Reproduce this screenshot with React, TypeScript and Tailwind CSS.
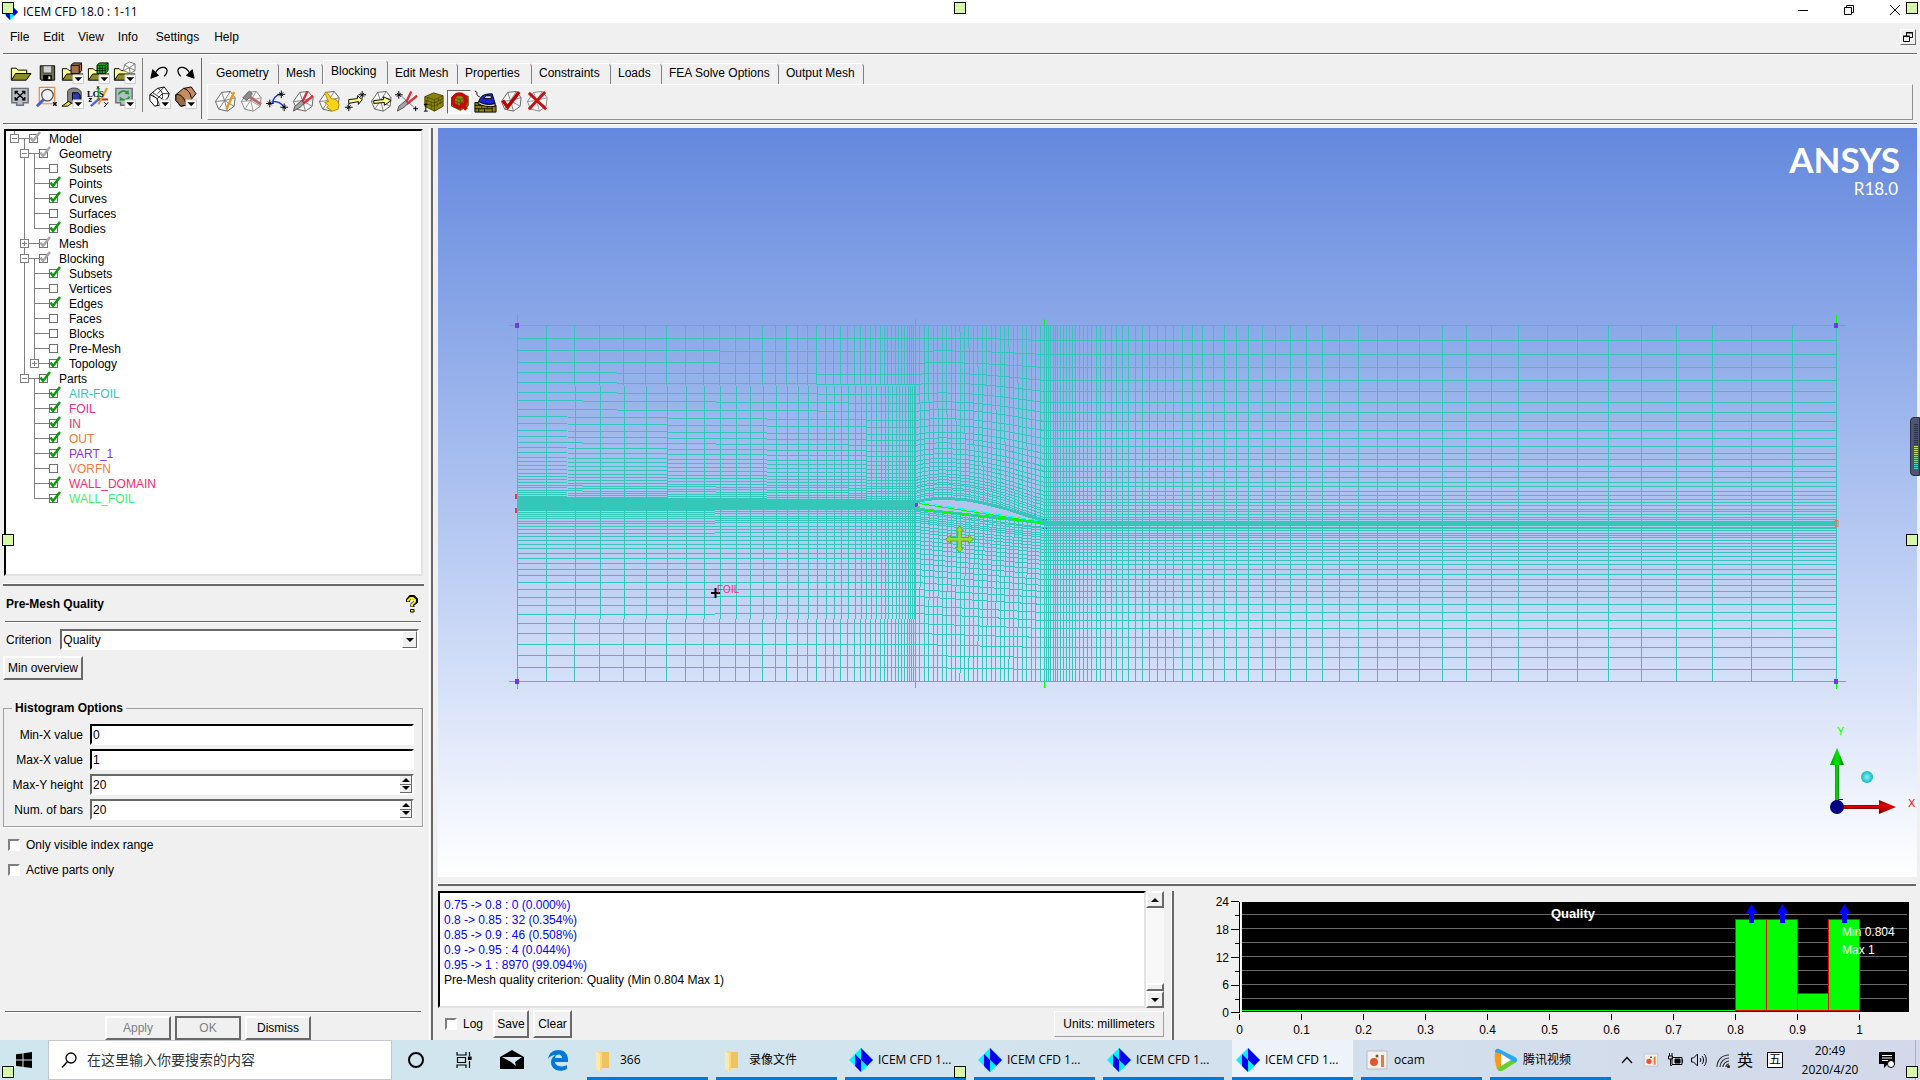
import React from 'react';

const ARIAL = "font-['Liberation_Sans',Arial,sans-serif]";
const SEGOE = "font-['Open_Sans','Noto_Sans_CJK_SC',sans-serif]";
const RAISED = 'border-2 border-t-white border-l-white border-r-[#696969] border-b-[#696969] bg-[#f0f0f0]';
const SUNKEN = 'border-2 border-t-[#696969] border-l-[#696969] border-r-white border-b-white bg-white';

/* ---------- toolbar icons ---------- */

const Icon: React.FC<{ children: React.ReactNode; className?: string }> = ({ children, className = 'size-6' }) => (
  <svg viewBox="-1 0 25 25" className={className} fill="none" stroke="#000" strokeWidth="1">
    {children}
  </svg>
);

const Wire = ({ color = '#666' }: { color?: string }) => (
  <g stroke={color}>
    <path d="M8 2.500 17 1.500 22 8 21 17 14 22 5 20 1.500 12z" fill="#f7f7f7" />
    <path d="M8 2.500 11 11 17 1.500M1.500 12 11 11 22 8M5 20 11 11 14 22M11 11 21 17" strokeWidth=".8" />
  </g>
);

const Drop = () => (
  <g>
    <path d="M12.500 14.500h11v9h-11z" fill="#fff" stroke="#ccc" />
    <path d="M14 17h8l-4 4z" fill="#000" stroke="none" />
  </g>
);

const Folder = () => (
  <g>
    <path d="M1.500 20V8h5l2 2h9v4" fill="#ffff99" />
    <path d="M1.500 20 6 13.500h17L18 20z" fill="#8b8b2b" />
  </g>
);

const Scissors = () => (
  <g>
    <path d="M16 1.500 10 14M22 6 11 15" stroke="#d8303c" strokeWidth="2.500" />
    <path d="M10 11 3 17 1.500 22l7-4 4-4z" fill="#a4a4a4" stroke="#555" />
  </g>
);

const Star = ({ x, y }: { x: number; y: number }) => (
  <path d={`M${x - 4} ${y}h8M${x} ${y - 4}v8M${x - 2} ${y - 2}l4 4M${x + 2} ${y - 2}l-4 4`} />
);

const Monitor = () => <path d="M3 2.500h17v15h-5v2.500h-7v-2.500H3z" fill="#b9bcc2" stroke="#6c7078" strokeWidth="1.500" />;

const fileIcons: [string, React.ReactNode][] = [
  ['Open project', <g key="a"><path d="M2.500 20V7.500h5l2 2h9V13" fill="#ffff99" /><path d="M2.500 20 7 13h16l-5 7z" fill="#8b8b2b" /></g>],
  ['Save project', <g key="b"><path d="M5.500 5h15v15h-14l-1-1z" fill="#6e7150" /><path d="M8.500 5h9v7.500h-9z" fill="#d4d4d4" stroke="#444" /><path d="M9 15h8v5H9z" fill="#000" /><path d="M14 16h2v3h-2z" fill="#fff" stroke="none" /></g>],
  ['Open geometry', <g key="c"><Folder /><path d="M10.500 4.500 13 2h8.500v8L19 13h-8.500z" fill="#a5714a" /><path d="M10.500 4.500H19V13M19 4.500 21.500 2" /><Drop /></g>],
  ['Open mesh', <g key="d"><Folder /><path d="M10.500 4.500 13 2h9v8l-3 3h-8.500z" fill="#18c02a" /><path d="M10.500 4.500H19V13M19 4.500 22 2M13.500 4.500V13M16 4.500V13M10.500 7.500H19l3-3M10.500 10H19l3-3" strokeWidth=".8" /><Drop /></g>],
  ['Open blocking', <g key="e"><Folder /><path d="m12 4 5-3 6 2v7l-5 3-7-3z" fill="#fff" stroke="#777" /><path d="m12 4 5 3 6-4M17 7l1 6M11 10l6-3 6 3" stroke="#777" /><Drop /></g>],
];

const viewIcons: [string, React.ReactNode][] = [
  ['Fit window', <g key="a"><Monitor /><path d="M6.500 5.500 16.500 14.500M16.500 5.500 6.500 14.500M6.500 8.500v-3h3M13.500 5.500h3v3M6.500 11.500v3h3M13.500 14.500h3v-3" strokeWidth="1.300" /></g>],
  ['Box zoom', <g key="b"><path d="M4.500 1.500h16v17h-16z" stroke="#ee8833" strokeWidth="1.200" /><circle cx="13" cy="9.500" r="6" fill="#f2f4fb" stroke="#555" strokeWidth="1.300" /><path d="m9 14-7 7" stroke="#4660cf" strokeWidth="3" /><path d="m19 17 3.500 3.500m0-3.500-3.500 3.500" strokeWidth="1.500" /></g>],
  ['Measure distance', <g key="c"><path d="M7 5c3-4 11-4 14 1v12H7z" fill="#888" stroke="#333" /><path d="M12 7h6l2 3v5h-8z" fill="#2738b8" /><path d="M8 16 1 21h6l4-3z" fill="#f0e040" /><Drop /></g>],
  ['Local coordinate system', <g key="d"><path d="M12 2v12" stroke="#18b030" strokeWidth="2" /><path d="m12 14-8 7" stroke="#5568d0" strokeWidth="2.500" /><path d="M12 14h10" stroke="#d02020" strokeWidth="2" /><path d="M21 2 12 19" stroke="#e9a030" strokeWidth="2.200" /><path d="m2 13 3 0-3 3h3M18 17l2 2m2-2-4 5M10 0l3 3m0-3-3 3" /><text x="0" y="11" fontSize="9" fontFamily="Liberation Serif, serif" fontWeight="700" fill="#000" stroke="none">LCS</text></g>],
  ['Refresh', <g key="e"><Monitor /><path d="M6 9c1-4 7-5 9-2M17 11c-1 4-7 4-9 2" stroke="#1c9c36" strokeWidth="1.800" /><path d="m16 4 1 5-5-1zM7 16v-5l4 3z" fill="#1c9c36" stroke="none" /><Drop /></g>],
];

const undoIcons: [string, React.ReactNode][] = [
  ['Undo', <g key="a"><path d="M7 14c4-9 12-9 13-4 0 3-1 4-3 6" strokeWidth="1.300" /><path d="m3 18 2-9 6 6z" fill="#000" /></g>],
  ['Redo', <g key="b"><path d="M17 14c-4-9-12-9-13-4 0 3 1 4 3 6" strokeWidth="1.300" /><path d="m21 18-2-9-6 6z" fill="#000" /></g>],
];

const renderIcons: [string, React.ReactNode][] = [
  ['Wire frame', <g key="a"><path d="M10 2.500 17 1l5 7-1 4-9 8-5 1-5-6V9z" fill="#fff" /><path d="M10 2.500C14 4 16 8 15 13M2 9c4 0 8 4 10 11M2 9l8 4 5-5 7 0M10 13v7M5 7l12 8M17 1l-7 7" strokeWidth=".8" /><Drop /></g>],
  ['Solid', <g key="b"><path d="M10 2.500 18 1l5 7-10 12-6 1-5-6V9z" fill="#c58d60" /><path d="M2 9c5-1 9 3 11 11l-6 1-5-6z" fill="#9c6a43" /><path d="M10 2.500c4 1 7 4 8 10" /><Drop /></g>],
];

const Bricks = ({ y = 0 }: { y?: number }) => (
  <g transform={`translate(0 ${y})`}>
    <path d="M3 7 12 3l10 3v11l-9 5L3 17z" fill="#8c8500" stroke="#4a4600" />
    <path d="m3 7 10 3 9-4M13 10v12M3 10.500l10 3 9-5M3 14l10 3 9-5M6 8v3M9.500 12.500V16M5 11v4M10 16v4M17 8.500v3M19 10.500v4M16 13v4" stroke="#3c3a00" strokeWidth=".7" />
  </g>
);

const blockingIcons: [string, React.ReactNode][] = [
  ['Create block', <g key="a"><Wire /><path d="M21 2 13 20" stroke="#e89a1c" strokeWidth="2.500" /></g>],
  ['Split block', <g key="b"><Wire color="#888" /><path d="m3 8 7-7 3 3-6 7z" fill="#8a8a8a" stroke="#666" /><path d="m10 7 12 8" stroke="#b86b6b" strokeWidth="3" /></g>],
  ['Merge vertices', <g key="c"><path d="M15 4C9 6 7 9 7 14M8 12c5 0 9 3 11 6" stroke="#1330d8" strokeWidth="1.500" /><Star x={16} y={4.5} /><Star x={4} y={14} /><Star x={19} y={18} /></g>],
  ['Edit block', <g key="d"><Wire /><Scissors /></g>],
  ['Associate', <g key="e"><Wire /><path d="M7 3 9 2l5 7 5 1 3 5-1 5-6 2-6-4 2-2-4-3 4-1z" fill="#ffd21c" stroke="#b88a00" /></g>],
  ['Move vertex', <g key="f"><path d="M5 14v-4l9-1V6l5 4-4 5v-3z" fill="#ffff88" /><Star x={19} y={5} /><Star x={5} y={18} /></g>],
  ['Transform blocks', <g key="g"><Wire /><path d="M4 11l10-1V7l8 4-7 5v-3l-11 1z" fill="#ffff88" /></g>],
  ['Edit edge', <g key="h"><path d="m3 4 18 16" stroke="#777" /><Star x={3} y={5} /><Scissors /><path d="M18 19.500h5M20.500 17v5" /></g>],
  ['Pre-mesh params', <g key="i"><Bricks /><path d="M4 15v7M2 15h4M2 22h4" /></g>],
  ['Pre-mesh quality', <g key="j"><Bricks /><circle cx="12" cy="11" r="7.500" stroke="#c80808" strokeWidth="4" /><path d="m14 14 6 7" stroke="#c80808" strokeWidth="4" /></g>],
  ['Pre-mesh smooth', <g key="k"><path d="M1 13h16l6 3v7H1z" fill="#8c8500" /><path d="M1 16h18M1 19.500h18M5 13v3M11 13v3M8 16v3M14 16v3M5 19v4M11 19v4M19 16v7" strokeWidth=".8" /><path d="M1 1c4 1 0 5 5 6" /><path d="M5 12c2-6 5-8 14-8l3 10c-6 2-12 1-17-2z" fill="#1826d8" /><path d="M5 12c5 3 11 4 17 2v3c-7 1-13 0-18-3z" fill="#d4d4e0" /><path d="m10 9 3-3h5v3z" fill="#dde" /></g>],
  ['Check blocks', <g key="l"><Wire /><path d="M3 11 8 18 20 2" stroke="#b80000" strokeWidth="3.500" /></g>],
  ['Delete block', <g key="m"><Wire color="#888" /><path d="m3 3 18 17M20 2 3 20" stroke="#c81010" strokeWidth="3" /></g>],
];

const IconRow = ({ items }: { items: [string, React.ReactNode][] }) => (
  <div className="flex gap-0.5">
    {items.map(([name, art]) => (
      <button key={name} aria-label={name} className="size-6">
        <Icon>{art}</Icon>
      </button>
    ))}
  </div>
);

/* ---------- tabs ---------- */

const tabs = [
  ['Geometry', 'w-[70px]'],
  ['Mesh', 'w-[44px]'],
  ['Blocking', 'w-[65px]'],
  ['Edit Mesh', 'w-[70px]'],
  ['Properties', 'w-[74px]'],
  ['Constraints', 'w-[79px]'],
  ['Loads', 'w-[51px]'],
  ['FEA Solve Options', 'w-[117px]'],
  ['Output Mesh', 'w-[85px]'],
];

const Toolbar = () => (
  <div className="mx-[3px] flex h-[71px] border-t border-b border-[#696969] shadow-[0_1px_0_#fff,inset_0_1px_0_#fff]">
    <div className="my-1 flex h-[54px] self-start border-r border-[#808080] pr-1.5">
      <div className="flex flex-col gap-px pt-[3px] pl-[5px]">
        <IconRow items={fileIcons} />
        <IconRow items={viewIcons} />
      </div>
    </div>
    <div className="my-1 flex w-[59px] flex-col gap-px border-r border-[#696969] pt-[3px] pl-1">
      <IconRow items={undoIcons} />
      <IconRow items={renderIcons} />
    </div>
    <div className="ml-[5px] flex flex-1 flex-col pt-1.5">
      <div className="ml-0.5 flex h-6 items-end">
        {tabs.map(([name, width]) => (
          <button
            key={name}
            className={`${width} rounded-tr-[4px] border-t border-r border-t-white border-r-[#808080] pl-[7px] text-left ${name === 'Blocking' ? 'h-6 border-l border-l-white pb-1' : 'h-[21px] pb-0.5'}`}
          >
            {name}
          </button>
        ))}
      </div>
      <div className="mr-1 flex h-9 items-center gap-0.5 border border-t-white border-l-white border-r-[#909090] border-b-[#909090] pl-[5px]">
        {blockingIcons.map(([name, art]) => (
          <button key={name} aria-label={name} className={`size-6 ${name === 'Pre-mesh quality' ? 'border border-t-[#696969] border-l-[#696969] border-r-white border-b-white bg-[#f8f8f8]' : ''}`}>
            <Icon className="size-full">{art}</Icon>
          </button>
        ))}
      </div>
    </div>
  </div>
);

/* ---------- model tree ---------- */

const cellPaths: Record<string, string> = {
  ' ': '',
  '|': 'M5.500 0v15',
  '├': 'M5.500 0v15M5.500 7.500H10',
  '└': 'M5.500 0v7.500H10',
  '─': 'M0 7.500h10',
  '┬': 'M0 7.500h10M5.500 7.500V15',
  m: 'M1.500 3.500h8v8h-8zM3 7.500h5M5.500 0v3',
  M: 'M1.500 3.500h8v8h-8zM3 7.500h5M5.500 0v3M5.500 12v3',
  p: 'M1.500 3.500h8v8h-8zM3 7.500h5M5.500 5v5M5.500 0v3',
  P: 'M1.500 3.500h8v8h-8zM3 7.500h5M5.500 5v5M5.500 0v3M5.500 12v3',
};

type Row = [guides: string, label: string, state: 'on' | 'off' | 'mixed', color?: string];

const rows: Row[] = [
  ['m┬', 'Model', 'mixed'],
  [' M┬', 'Geometry', 'mixed'],
  [' |├─', 'Subsets', 'off'],
  [' |├─', 'Points', 'on'],
  [' |├─', 'Curves', 'on'],
  [' |├─', 'Surfaces', 'off'],
  [' |└─', 'Bodies', 'on'],
  [' P─', 'Mesh', 'mixed'],
  [' M┬', 'Blocking', 'mixed'],
  [' |├─', 'Subsets', 'on'],
  [' |├─', 'Vertices', 'off'],
  [' |├─', 'Edges', 'on'],
  [' |├─', 'Faces', 'off'],
  [' |├─', 'Blocks', 'off'],
  [' |├─', 'Pre-Mesh', 'off'],
  [' |p─', 'Topology', 'on'],
  [' m┬', 'Parts', 'on'],
  ['  ├─', 'AIR-FOIL', 'on', 'text-[#34c6b9]'],
  ['  ├─', 'FOIL', 'on', 'text-[#ee3088]'],
  ['  ├─', 'IN', 'on', 'text-[#f03468]'],
  ['  ├─', 'OUT', 'on', 'text-[#f07a34]'],
  ['  ├─', 'PART_1', 'on', 'text-[#8434f0]'],
  ['  ├─', 'VORFN', 'off', 'text-[#f07a40]'],
  ['  ├─', 'WALL_DOMAIN', 'on', 'text-[#f03070]'],
  ['  └─', 'WALL_FOIL', 'on', 'text-[#44f070]'],
];

const Tree = () => (
  <div className="ml-1 h-[447px] w-[419px] border-2 border-t-black border-l-black border-r-[#e3e3e3] border-b-[#e3e3e3] bg-white pl-[3px]">
    {rows.map(([guides, label, state, color = 'text-black'], i) => (
      <label key={i} className="flex h-[15px] items-center">
        {[...guides].map((cell, c) => (
          <svg key={c} width="10" height="15" fill="none" stroke="#808080" shapeRendering="crispEdges">
            <path d={cellPaths[cell]} />
          </svg>
        ))}
        <span className="relative flex">
          <input type="checkbox" defaultChecked={state !== 'off'} className="size-[9px] appearance-none border border-[#707070] bg-white" />
          {state !== 'off' && (
            <svg viewBox="0 0 12 12" className="pointer-events-none absolute bottom-0 left-0 size-3 overflow-visible" fill="none">
              <path d="M1.500 6.500 4 10 11 1" stroke={state === 'on' ? '#0a9a0a' : '#a8a8a8'} strokeWidth="2.500" />
            </svg>
          )}
        </span>
        <span className={`ml-[11px] ${color}`}>{label}</span>
      </label>
    ))}
  </div>
);

/* ---------- quality panel ---------- */

const Arrow = ({ up = false }: { up?: boolean }) => (
  <svg viewBox="0 0 8 4" className="h-1 w-2" fill="#000">
    <path d={up ? 'M0 4h8L4 0z' : 'M0 0h8L4 4z'} />
  </svg>
);

const fields: [string, string, boolean][] = [
  ['Min-X value', '0', false],
  ['Max-X value', '1', false],
  ['Max-Y height', '20', true],
  ['Num. of bars', '20', true],
];

const TickBox = ({ label }: { label: string }) => (
  <label className="flex items-center gap-1.5">
    <input type="checkbox" className="size-3 appearance-none border-2 border-t-[#808080] border-l-[#808080] border-r-white border-b-white bg-white" />
    {label}
  </label>
);

const QualityPanel = () => (
  <div className="mr-[6px] ml-[3px] flex flex-1 flex-col">
    <div className="mr-0.5 ml-0.5 flex h-9 items-center justify-between border-b border-[#696969] pr-[3px] pl-px shadow-[0_1px_0_#fff]">
      <h2 className="font-bold">Pre-Mesh Quality</h2>
      <button aria-label="Help">
        <svg viewBox="0 0 12 18" className="h-[18px] w-3" fill="none">
          <path d="M2 7V5l2.500-3h3L10 4.500v2L6.500 9.500v2.500" stroke="#000" strokeWidth="4" />
          <path d="M2 6.500V5.500L4.500 3h2.500L9 5v1.500L6 9.500v2" stroke="#ffee00" strokeWidth="2" />
          <path d="M4.500 14.500h3.500v2.500H4.500z" fill="#ffee00" stroke="#000" />
        </svg>
      </button>
    </div>
    <div className="mt-[7px] mr-1 ml-[3px] flex h-[21px] items-center gap-[9px]">
      <label htmlFor="criterion">Criterion</label>
      <div className="relative h-full flex-1">
        <select id="criterion" className={`size-full appearance-none pl-px ${SUNKEN}`}>
          <option>Quality</option>
        </select>
        <span className="pointer-events-none absolute top-0.5 right-0.5 bottom-0.5 flex w-[15px] items-center justify-center border border-t-white border-l-white border-r-[#696969] border-b-[#696969] bg-[#f0f0f0]">
          <Arrow />
        </span>
      </div>
    </div>
    <button className={`mt-1.5 h-6 w-20 ${RAISED}`}>Min overview</button>
    <fieldset className="mt-5 border border-[#a0a0a0] pb-1.5 pl-2 pr-2 shadow-[1px_1px_0_#fff]">
      <legend className="px-[3px] font-bold">Histogram Options</legend>
      <div className="mt-2 grid grid-cols-[71px_1fr] items-center gap-x-[7px] gap-y-1">
        {fields.map(([label, value, spin]) => (
          <React.Fragment key={label}>
            <label htmlFor={label} className="text-right whitespace-nowrap">{label}</label>
            <div className={`flex h-[21px] ${SUNKEN} ${spin ? '' : 'border-t-black border-l-black'}`}>
              <input id={label} defaultValue={value} className="min-w-0 flex-1 pl-px outline-none" />
              {spin && (
                <div className="flex w-3 flex-col">
                  <button aria-label={`Increase ${label}`} className="flex flex-1 items-center justify-center border-r border-b border-[#696969] bg-[#f0f0f0]"><Arrow up /></button>
                  <button aria-label={`Decrease ${label}`} className="flex flex-1 items-center justify-center border-r border-b border-[#696969] bg-[#f0f0f0]"><Arrow /></button>
                </div>
              )}
            </div>
          </React.Fragment>
        ))}
      </div>
    </fieldset>
    <div className="mt-2.5 ml-[5px] flex flex-col gap-[9px]">
      <TickBox label="Only visible index range" />
      <TickBox label="Active parts only" />
    </div>
    <div className="mt-auto mr-0.5 ml-0.5 flex justify-center gap-1 border-t border-[#696969] pt-1 pr-2.5 shadow-[inset_0_1px_0_#fff]">
      <button className={`h-6 w-[66px] text-[#808080] ${RAISED}`}>Apply</button>
      <button className="h-6 w-[66px] border-2 border-[#696969] text-[#808080]">OK</button>
      <button className={`h-6 w-[66px] ${RAISED}`}>Dismiss</button>
    </div>
  </div>
);

/* ---------- mesh view ---------- */

const inletX = [517, 546, 574, 599, 623, 645, 666, 685, 703, 719, 735, 749, 762, 775, 786, 797, 807, 816, 825, 833, 840, 847, 854, 860, 865, 870, 875, 880, 884, 887, 891, 895, 898, 901, 904, 907, 909, 911, 913];
const wakeX = [1044, 1046, 1048, 1050, 1053, 1055, 1057, 1060, 1063, 1066, 1069, 1072, 1075, 1079, 1083, 1087, 1091, 1096, 1100, 1105, 1111, 1116, 1122, 1128, 1135, 1142, 1149, 1157, 1165, 1173, 1182, 1192, 1202, 1213, 1224, 1236, 1248, 1262, 1275, 1290, 1306, 1322, 1339, 1358, 1377, 1397, 1419, 1442, 1466, 1491, 1518, 1547, 1577, 1608, 1641, 1676, 1712, 1751, 1792, 1836];
// line heights at the inlet, the leading edge and the trailing edge
const upper = [
  [325, 338, 350, 362, 372, 382, 392, 400, 409, 416, 423, 430, 436, 442, 447, 452, 457, 461, 465, 469, 473, 476, 479, 482, 485, 487, 490, 492, 494],
  [325, 338, 351, 363, 374, 384, 394, 403, 411, 420, 427, 434, 440, 445, 451, 456, 461, 465, 469, 473, 477, 480, 483, 486, 488, 491, 493, 496, 498],
  [325, 340, 354, 367, 380, 391, 402, 412, 421, 430, 438, 446, 453, 459, 466, 471, 477, 482, 486, 491, 495, 499, 502, 505, 509, 511, 514, 517, 519],
];
const lower = [
  [512, 514, 516, 518, 521, 523, 526, 529, 533, 536, 540, 544, 548, 553, 558, 563, 569, 575, 582, 589, 597, 605, 614, 623, 633, 644, 655, 667, 681],
  [511, 513, 516, 518, 520, 522, 526, 529, 532, 536, 540, 544, 548, 553, 558, 563, 569, 575, 582, 589, 596, 605, 613, 623, 633, 644, 655, 667, 681],
  [527, 528, 530, 533, 535, 537, 540, 543, 546, 549, 552, 556, 560, 564, 569, 574, 579, 585, 591, 597, 604, 612, 620, 628, 637, 647, 657, 669, 681],
];

const camber = [[0, 0], [0.08, -0.13], [0.21, -0.21], [0.41, -0.1], [0.55, 0.09], [0.7, 0.35], [0.85, 0.68], [1, 1]];
const topAt = (u: number) => {
  const i = Math.max(1, camber.findIndex(([x]) => x >= u));
  const [x0, y0] = camber[i - 1];
  const [x1, y1] = camber[i];
  return y0 + ((u - x0) / (x1 - x0)) * (y1 - y0);
};
const steps = Array.from({ length: 30 }, (_, i) => i / 29);
const foilX = (u: number) => 915.5 + 129 * u;
const foilTop = (u: number) => 502 + 19 * topAt(u);
const foilLow = (u: number) => 509 + 14 * u;

const meshPath = [
  ...upper[0].map((y, k) => {
    const [a, b] = [upper[1][k] + 0.5, upper[2][k] + 0.5];
    return `M517 ${y + 0.5}L${steps.map(u => `${foilX(u)} ${a + (b - a) * topAt(u)}`).join('L')}H1836.5`;
  }),
  ...lower[0].map((y, k) => `M517 ${y + 0.5}L915.500 ${lower[1][k] + 0.5}L1044.500 ${lower[2][k] + 0.5}H1836.5`),
  ...inletX.map(x => {
    const bulge = x > 560 ? 2 : 0;
    return `M${x + 0.5} 325Q${x + 0.5 + bulge} 500 ${x + 0.5} 681`;
  }),
  ...wakeX.map(x => `M${x + 0.5} 325V681`),
  ...steps.map(u => `M${foilX(u)} 325L${foilX(u) + 4 * u * (1 - u)} ${foilTop(u)}M${foilX(u) + 4 * u * (1 - u)} ${foilLow(u)}L${foilX(u)} 681`),
].join('');

const foilOutline = `M${steps.map(u => `${foilX(u)} ${foilTop(u)}`).join('L')}L${[...steps].reverse().map(u => `${foilX(u)} ${foilLow(u)}`).join('L')}z`;

const MeshView = () => (
  <div className="relative min-h-0 flex-1 bg-linear-to-b from-[#6488dd] to-white">
    <svg viewBox="438 128 1479 749" className="size-full">
      <g shapeRendering="crispEdges">
        <path d="M517.500 315v10M509 325.500h8M517.500 681v8M509 681.500h8M915.500 319v6M915.500 682v6M1044.500 319v6M1044.500 682v6M1836.500 315v10M1838 325.500h8M1836.500 681v8M1838 681.500h8" stroke="#00ff00" />
        <path d={meshPath} stroke="#34c6b9" fill="none" />
        <path d="M517 496 915 500 919 502V509L915 510 517 511z" fill="#34c6b9" />
        <path d="M1040 520 1045 521H1837V526H1045L1038 523z" fill="#34c6b9" />
        <path d={foilOutline} fill="#b4c4ef" stroke="#34c6b9" strokeWidth="3" />
        <path d="M922 502.500 1040 521" stroke="#00ffff" strokeDasharray="9 3" />
        <path d="M919 503.500 1041 522.500M920 509.500 1041 523" stroke="#00ff00" fill="none" />
        <path d="M915 503h3v4h-3z" fill="#8434f0" />
        <path d="M917 506h3v4h-3z" fill="#22ee44" />
      </g>
      <g fill="#7038e8" shapeRendering="crispEdges">
        <path d="M515 323h4v5h-4zM515 679h4v5h-4zM1834 323h4v5h-4zM1834 679h4v5h-4z" />
      </g>
      <path d="M515 494h2v5h-2zM515 508h2v5h-2z" fill="#f03060" />
      <path d="M1835 520.500h3v6h-3z" fill="none" stroke="#f07a34" />
      <path d="M1043 519.500h4M1043 528.500h4" stroke="#5040d0" strokeDasharray="1 2" />
      <path d="m959.500 526 4 5h-2.200v6.500h7.200v-2.200l5 4-5 4v-2.300h-7.200v6.500h2.200l-4 5-4-5h2.200v-6.500h-7.200v2.300l-5-4 5-4v2.200h7.200V531h-2.200z" fill="#98dc38" stroke="#6ba81c" />
      <path d="M711 593h9M715.500 588v10" stroke="#000" strokeWidth="2" />
      <text x="717" y="593" fontSize="10" fill="#ee3088" fontFamily="Liberation Sans, sans-serif">FOIL</text>
      <g fill="#fff" textAnchor="end" fontFamily="Lato, sans-serif">
        <text x="1900" y="173" fontSize="35" fontWeight="700">ANSYS</text>
        <text x="1898" y="195" fontSize="17">R18.0</text>
      </g>
      <defs>
        <linearGradient id="yAxis"><stop stopColor="#00a000" /><stop offset=".5" stopColor="#00e800" /><stop offset="1" stopColor="#008000" /></linearGradient>
        <linearGradient id="xAxis" x1="0" y1="0" x2="0" y2="1"><stop stopColor="#800000" /><stop offset=".4" stopColor="#e80000" /><stop offset="1" stopColor="#700000" /></linearGradient>
        <radialGradient id="zBall"><stop stopColor="#80f4f4" /><stop offset="1" stopColor="#18b8c0" /></radialGradient>
      </defs>
      <path d="M1835 764h4v38h-4z" fill="url(#yAxis)" />
      <path d="m1837 748 7 17h-14z" fill="url(#yAxis)" />
      <path d="M1840 805h40v4h-40z" fill="url(#xAxis)" />
      <path d="m1879 800 17 7-17 7z" fill="url(#xAxis)" />
      <path d="M1838 799.500h5" stroke="#0000c0" />
      <circle cx="1837" cy="807" r="7" fill="#000080" />
      <circle cx="1867" cy="777" r="6" fill="url(#zBall)" />
      <g fontSize="11" fontFamily="Liberation Sans, sans-serif">
        <text x="1837" y="735" fill="#00ff00">Y</text>
        <text x="1908" y="807" fill="#ff0000">X</text>
      </g>
    </svg>
    <div className="absolute top-[289px] -right-[3px] flex h-[59px] w-2.5 flex-col gap-px rounded-l-sm border border-[#2b3048] bg-[#4c566e] pt-1.5 pl-[3px]">
      {Array.from({ length: 23 }, (_, i) => (
        <span key={i} className={`h-px w-1 shrink-0 ${i < 11 ? 'bg-[#2b3048]' : i < 16 ? 'bg-[#c8e050]' : i < 20 ? 'bg-[#80e080]' : 'bg-[#40d8c0]'}`} />
      ))}
    </div>
  </div>
);

/* ---------- messages and histogram ---------- */

const messages = ['0.75 -> 0.8 : 0 (0.000%)', '0.8 -> 0.85 : 32 (0.354%)', '0.85 -> 0.9 : 46 (0.508%)', '0.9 -> 0.95 : 4 (0.044%)', '0.95 -> 1 : 8970 (99.094%)'];

const Messages = () => (
  <div className="flex w-[736px] flex-col border-r-2 border-[#696969] pr-2 shadow-[inset_-1px_0_0_#fff]">
    <div className="flex h-[117px]">
      <div className="flex-1 border-2 border-t-black border-l-black border-r-[#e3e3e3] border-b-[#e3e3e3] bg-white pt-[5px] pl-1 leading-[15px]">
        {messages.map(m => <p key={m} className="text-[#0000ff]">{m}</p>)}
        <p>Pre-Mesh quality criterion: Quality (Min 0.804 Max 1)</p>
      </div>
      <div className="flex w-[18px] flex-col bg-[#f8f8f8]">
        <button aria-label="Scroll up" className={`flex h-[17px] items-center justify-center ${RAISED}`}><Arrow up /></button>
        <div className={`mt-auto h-2 ${RAISED}`} />
        <button aria-label="Scroll down" className={`flex h-[17px] items-center justify-center ${RAISED}`}><Arrow /></button>
      </div>
    </div>
    <div className="mt-0.5 flex items-center gap-1 pl-[7px]">
      <div className="mr-1.5"><TickBox label="Log" /></div>
      <button className={`h-7 w-9 ${RAISED}`}>Save</button>
      <button className={`h-7 w-[39px] ${RAISED}`}>Clear</button>
      <button className="ml-auto h-[26px] w-[110px] border border-t-white border-l-white border-r-[#a0a0a0] border-b-[#a0a0a0]">Units: millimeters</button>
    </div>
  </div>
);

const bars = [[1735.5, 919.5], [1766.5, 919.5], [1797.5, 993.5], [1828.5, 919.5]];

const Histogram = () => (
  <svg viewBox="1174 891 746 149" className="min-w-0 flex-1" fontSize="12" fontFamily="Liberation Sans, Arial, sans-serif">
    <path d="M1242 902h667v110h-667z" fill="#000" />
    <path d="M1242 914.500h665M1242 928.500h665M1242 942.500h665M1242 956.500h665M1242 970.500h665M1242 984.500h665M1242 998.500h665" stroke="#696969" />
    <path d="M1240.500 902v110" stroke="#fff" />
    <path d="M1239.500 902v111M1231 901.500h8M1231 929.500h8M1231 957.500h8M1231 985.500h8M1231 1012.500h8M1235 915.500h4M1235 943.500h4M1235 971.500h4M1235 999.500h4" stroke="#000" />
    {[24, 18, 12, 6, 0].map((n, i) => (
      <text key={n} x="1229" y={906 + Math.round(i * 27.75)} textAnchor="end">{n}</text>
    ))}
    {['0', '0.1', '0.2', '0.3', '0.4', '0.5', '0.6', '0.7', '0.8', '0.9', '1'].map((n, i) => (
      <g key={n}>
        <path d={`M${1239.5 + i * 62} 1014v6`} stroke="#000" />
        <text x={1239.5 + i * 62} y="1034" textAnchor="middle">{n}</text>
      </g>
    ))}
    <path d="M1242 1010.500h494" stroke="#00ff00" />
    {bars.map(([x, y]) => (
      <path key={x} d={`M${x} ${y}h31V1010.500h-31z`} fill="#00ff00" stroke="#ff0000" />
    ))}
    <path d="m1751.500 904 5.500 9h-3v10h-5v-10h-3zM1782.500 904l5.500 9h-3v10h-5v-10h-3zM1844.500 904l5.500 9h-3v10h-5v-10h-3z" fill="#0000ff" />
    <g fill="#fff">
      <text x="1573" y="918" fontWeight="700" fontSize="13" textAnchor="middle">Quality</text>
      <text x="1842" y="936">Min 0.804</text>
      <text x="1842" y="954">Max 1</text>
    </g>
  </svg>
);

/* ---------- Windows taskbar ---------- */

const IcemLogo = ({ className }: { className: string }) => (
  <svg viewBox="0 0 24 24" className={className}>
    <path d="M12 0 24 12 12 24 0 12z" fill="#00f4ff" />
    <path d="m12 0 6 6-6 6zM6 6l6 6-6 6zM18 6l6 6-6 6zM12 12l6-6v12zM12 12v12l-6-6z" fill="#0000ee" />
    <path d="m12 12 6 6-6 6z" fill="#00f4ff" />
  </svg>
);

const FolderIcon = () => (
  <svg viewBox="0 0 24 24" className="size-6">
    <path d="M5 3h6v20l-6-2z" fill="#f8d980" />
    <path d="M11 4h7v16h-7z" fill="#efc25c" />
    <path d="M5 3 9 6v18l-4-3z" fill="#ffe9a8" />
  </svg>
);

const OcamIcon = ({ className }: { className: string }) => (
  <svg viewBox="0 0 24 24" className={className}>
    <path d="M2 3h20v18H2z" fill="#f3f1ee" stroke="#bbb" />
    <circle cx="9" cy="14" r="4" fill="#e0582c" />
    <circle cx="12" cy="8" r="1.500" fill="#8a4a38" />
    <path d="M16 7h3v12h-3z" fill="#ee7838" />
  </svg>
);

const VideoIcon = () => (
  <svg viewBox="0 0 24 24" className="size-6">
    <path d="M1 4C1 0 4 0 7 2l14 7c3 2 3 4 0 6l-9 2z" fill="#2aa7f0" />
    <path d="M1 4c-1 5 0 11 2 17l9-4-5-11z" fill="#ff9a1c" />
    <path d="M3 20c1 4 4 4 7 2l12-8-10-2-6 6z" fill="#6ccc2c" />
    <path d="M7 6v12l10-6z" fill="#fff" />
  </svg>
);

const tasks: [string, React.ReactNode][] = [
  ['366', <FolderIcon key="a" />],
  ['录像文件', <FolderIcon key="b" />],
  ['ICEM CFD 1...', <IcemLogo key="c" className="size-6" />],
  ['ICEM CFD 1...', <IcemLogo key="d" className="size-6" />],
  ['ICEM CFD 1...', <IcemLogo key="e" className="size-6" />],
  ['ICEM CFD 1...', <IcemLogo key="f" className="size-6" />],
  ['ocam', <OcamIcon key="g" className="size-6" />],
  ['腾讯视频', <VideoIcon key="h" />],
];

const Taskbar = () => (
  <footer className={`flex h-10 items-center bg-linear-to-r from-[#cfe6ee] via-[#d2e4ee] to-[#d3d9ea] ${SEGOE} text-black`}>
    <button aria-label="Start" className="flex h-10 w-12 items-center justify-center">
      <svg viewBox="0 0 16 16" className="size-4">
        <path d="m0 2.300 6.500-.9v6.200H0zM7.500 1.200 16 0v7.600H7.500zM0 8.600h6.500v6.200L0 13.900zM7.500 8.600H16V16l-8.500-1.100z" />
      </svg>
    </button>
    <label className="flex h-10 w-[344px] items-center gap-2.5 border border-[#c4c8cc] bg-white pl-3">
      <svg viewBox="0 0 16 16" className="size-4" fill="none" stroke="#000" strokeWidth="1.300">
        <circle cx="10" cy="6" r="5" />
        <path d="M6.500 9.500 1 15.500" />
      </svg>
      <input aria-label="Search" placeholder="在这里输入你要搜索的内容" className="w-60 text-sm outline-none placeholder:text-[#333]" />
    </label>
    <div className="flex">
      <button aria-label="Cortana" className="flex h-10 w-12 items-center justify-center"><span className="size-4 rounded-full border-2 border-black" /></button>
      <button aria-label="Task view" className="flex h-10 w-12 items-center justify-center">
        <svg viewBox="0 0 16 16" className="size-4" fill="none" stroke="#000" strokeWidth="1.200">
          <path d="M1 0v3h9V0M1 16v-3h9v3M1.500 5.500h8v5h-8zM13.500 0v4M13.500 9v7" />
          <path d="M12.500 5h2.500v2.500h-2.500z" fill="#000" />
        </svg>
      </button>
      <button aria-label="Mail" className="flex h-10 w-12 items-center justify-center">
        <svg viewBox="0 0 24 20" className="h-5 w-6">
          <path d="M0 7 12 0l12 7v12H0z" />
          <path d="M2 7h20l-7 5 1 4-5-4z" fill="#d2e6ee" />
        </svg>
      </button>
      <button aria-label="Edge" className="flex h-10 w-11 items-center justify-center">
        <svg viewBox="0 0 22 22" className="size-[22px]">
          <path d="M1 10C2 4 6 1 11.500 1 18 1 21 6 21 10v3H8c0 4 7 6 12 3v4c-7 4-16 1-16-7 0-3 2-6 5-7-4 0-7 2-8 4zm7-1h7c0-4-6-5-7 0z" fill="#0078d7" />
        </svg>
      </button>
    </div>
    <div className="ml-[7px] flex gap-2">
      {tasks.map(([name, icon], i) => (
        <button key={i} className={`flex h-10 w-[121px] items-center gap-[5px] border-b-[3px] border-[#0078d7] pt-[3px] pl-1 text-left ${i === 5 ? 'bg-[#edf3f8]' : ''}`}>
          {icon}
          <span className="flex-1 text-xs whitespace-nowrap">{name}</span>
        </button>
      ))}
    </div>
    <div className="ml-auto flex items-center">
      <svg viewBox="0 0 12 8" className="mr-2.5 h-2 w-3" fill="none" stroke="#000" strokeWidth="1.300"><path d="m1 7 5-5.500L11 7" /></svg>
      <OcamIcon className="mr-2 size-4" />
      <svg viewBox="0 0 16 16" className="mr-2 size-4" fill="none" stroke="#000"><path d="M5 5.500h10v7H5zM15.500 7.500v3M2.500 1v3M5 1v3M1.500 4h4v3h-4zM3.500 7v6.500H5" /><path d="M8 7h5v4H8z" fill="#000" /></svg>
      <svg viewBox="0 0 16 16" className="mr-2 size-4" fill="none" stroke="#000"><path d="M.500 6h2l4-4v12l-4-4h-2zM9 6c1 1 1 3 0 4M11 4c2 2 2 6 0 8M13 2c3 3 3 9 0 12" /></svg>
      <svg viewBox="0 0 16 16" className="mr-1.5 size-4" fill="none" stroke="#333" strokeWidth="1.200"><path d="M2 15C2 8 7 3 14 3M5 15c0-5 4-9 9-9M8 15c0-3 3-6 6-6M11 15c0-2 1-3 3-3" /><circle cx="13.500" cy="14.500" r="1" fill="#000" /></svg>
      <span className="mr-3.5 text-base">英</span>
      <span className="mr-4 flex size-4 items-center justify-center border border-black bg-white text-xs">五</span>
      <div className="mr-[18px] w-[62px] text-center text-xs leading-[19px]">
        <p>20:49</p>
        <p>2020/4/20</p>
      </div>
      <svg viewBox="0 0 16 16" className="mr-5 size-4"><path d="M0 0h16v12h-7l-4 4v-4H0z" /><path d="M3 3.500h10M3 6h10M3 8.500h6" stroke="#fff" /><circle cx="12" cy="12" r="3.500" fill="#fff" stroke="#000" /></svg>
      <span className="h-10 w-[5px] border-l border-[#a8b0bc]" />
    </div>
  </footer>
);

const Handles = () => (
  <div className="pointer-events-none absolute inset-0.5 grid grid-cols-3 content-between">
    {Array.from({ length: 9 }, (_, i) => (
      <span
        key={i}
        className={`size-3 ${i === 4 ? '' : 'border border-black bg-[#d6f8a8]'} ${i % 3 === 1 ? 'justify-self-center' : i % 3 === 2 ? 'justify-self-end' : ''}`}
      />
    ))}
  </div>
);

const menus = ['File', 'Edit', 'View', 'Info'];

const App: React.FC = () => (
  <div className={`relative flex h-screen flex-col overflow-hidden bg-[#f0f0f0] text-xs text-black ${ARIAL}`}>
    <header className={`flex h-[23px] items-center bg-white ${SEGOE}`}>
      <IcemLogo className="mr-[5px] ml-0.5 size-4" />
      <h1>ICEM CFD 18.0 : 1-11</h1>
      <div className="mr-5 ml-auto flex items-center gap-9 pb-1">
        <button aria-label="Minimize"><svg className="h-2.5 w-2.5" stroke="#000"><path d="M0 5.500h10" /></svg></button>
        <button aria-label="Restore"><svg className="h-2.5 w-2.5" stroke="#000" fill="none"><path d="M.500 2.500h7v7h-7zM2.500 2.500v-2h7v7h-2" /></svg></button>
        <button aria-label="Close"><svg className="h-2.5 w-2.5" stroke="#000"><path d="m0 0 10 10M10 0 0 10" /></svg></button>
      </div>
    </header>
    <nav className="flex h-[30px] items-center pr-1 pb-0.5 pl-2.5">
      <div className="flex gap-3.5">
        {menus.map(m => <button key={m}>{m}</button>)}
      </div>
      <button className="ml-[18px]">Settings</button>
      <button className="ml-[15px]">Help</button>
      <button aria-label="Restore view" className="ml-auto flex size-4 items-center justify-center border border-t-white border-l-white border-r-[#696969] border-b-[#696969]">
        <svg className="size-2.5" fill="none" stroke="#000"><path d="M.500 4.500h6v5h-6zM0 4h7M3.500 4V.500h6v5H7M3 1h7" /></svg>
      </button>
    </nav>
    <Toolbar />
    <div className="flex min-h-0 flex-1">
      <aside className="mt-[5px] flex w-[429px] flex-col">
        <Tree />
        <div className="mt-[7px] mr-[5px] ml-[3px] h-[3px] border-b-2 border-[#696969] bg-white" />
        <QualityPanel />
      </aside>
      <div className="mt-1 mr-[5px] w-1 border-r-2 border-l border-l-white border-r-[#696969]" />
      <main className="mt-1 flex min-w-0 flex-1 flex-col">
        <div className="mr-[3px] flex min-h-0 flex-1 flex-col">
          <MeshView />
        </div>
        <div className="mt-1.5 mr-1 h-[3px] border-b-2 border-[#696969] bg-white" />
        <div className="flex h-[154px] pt-[5px]">
          <Messages />
          <Histogram />
        </div>
      </main>
    </div>
    <Taskbar />
    <Handles />
  </div>
);

export default App;
